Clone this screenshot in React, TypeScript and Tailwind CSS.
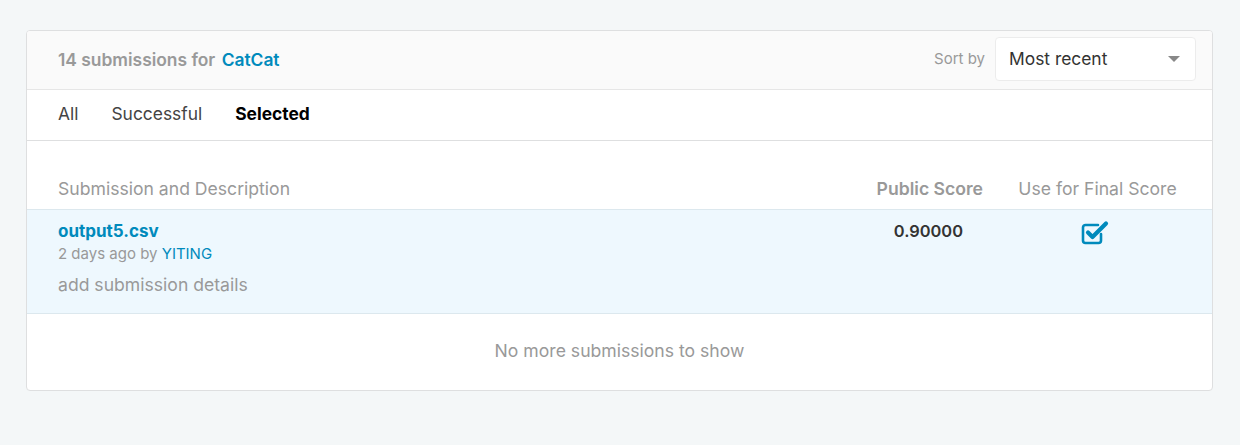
import React from 'react';

const font = { fontFamily: 'Inter, "Liberation Sans", sans-serif' };

const CheckSquare: React.FC = () => (
  <svg width="28" height="26" viewBox="0 0 28 26" fill="none">
    <path
      d="M20 14v6.5a2.5 2.5 0 0 1-2.5 2.5H4.5A2.5 2.5 0 0 1 2 20.5V7.5A2.5 2.5 0 0 1 4.5 5H17"
      stroke="#008abc"
      strokeWidth="2.6"
      strokeLinecap="round"
    />
    <path
      d="M7 12.5l4.5 4.5L25 3.5"
      stroke="#008abc"
      strokeWidth="4.2"
      strokeLinecap="round"
      strokeLinejoin="round"
    />
  </svg>
);

const App: React.FC = () => {
  return (
    <div className="min-h-[445px] bg-[#f4f7f8] pt-[30px] px-[26px]" style={font}>
      <div className="w-[1187px] rounded-[4px] border border-[#dedfe0] bg-white overflow-hidden">
        {/* header */}
        <div className="h-[59px] flex items-center justify-between bg-[#fafafa] border-b border-[#e6e6e6] pl-[31px] pr-[16px]">
          <div className="text-[17.4px] font-semibold text-[#999]">
            14 submissions for <span className="text-[#008abc] ml-[2px]">CatCat</span>
          </div>
          <div className="flex items-center gap-[10px] pb-[2px]">
            <span className="text-[15px] text-[#999]">Sort by</span>
            <div className="w-[201px] h-[44px] flex items-center justify-between rounded-[4px] border border-[#ececec] bg-white pl-[13px] pr-[15px]">
              <span className="text-[17.4px] text-[#333]">Most recent</span>
              <span className="w-0 h-0 border-x-[6px] border-x-transparent border-t-[6px] border-t-[#888]"></span>
            </div>
          </div>
        </div>

        {/* tabs */}
        <div className="h-[51px] flex items-center gap-[33px] pl-[31px] pb-[2px] border-b border-[#dedfe0] text-[17.4px]">
          <span className="text-[#444]">All</span>
          <span className="text-[#444]">Successful</span>
          <span className="text-black font-bold">Selected</span>
        </div>

        {/* table head */}
        <div className="h-[68px] flex items-end pb-[7px] pl-[31px] text-[17.6px] text-[#999]">
          <div className="flex-1">Submission and Description</div>
          <div className="w-[120px] text-right font-semibold">Public Score</div>
          <div className="w-[229px] text-center">Use for Final Score</div>
        </div>

        {/* row */}
        <div className="h-[105px] flex bg-[#eef8fe] border-y border-[#dce8ee] pl-[31px] pt-[10px]">
          <div className="flex-1">
            <div className="text-[17px] font-bold text-[#008abc] leading-[22px]">output5.csv</div>
            <div className="text-[15px] text-[#999] leading-[22px] mt-[1px]">
              2 days ago by <span className="text-[#008abc]">YITING</span>
            </div>
            <div className="text-[17.6px] text-[#999] mt-[7px]">add submission details</div>
          </div>
          <div className="w-[120px] text-right text-[16.4px] font-semibold text-[#333] pr-[20px] -mt-[1px]">0.90000</div>
          <div className="w-[229px] flex justify-center pr-[6px]">
            <CheckSquare />
          </div>
        </div>

        {/* footer */}
        <div className="h-[76px] flex items-center justify-center pb-[2px] text-[17.6px] text-[#999]">
          No more submissions to show
        </div>
      </div>
    </div>
  );
};

export default App;
